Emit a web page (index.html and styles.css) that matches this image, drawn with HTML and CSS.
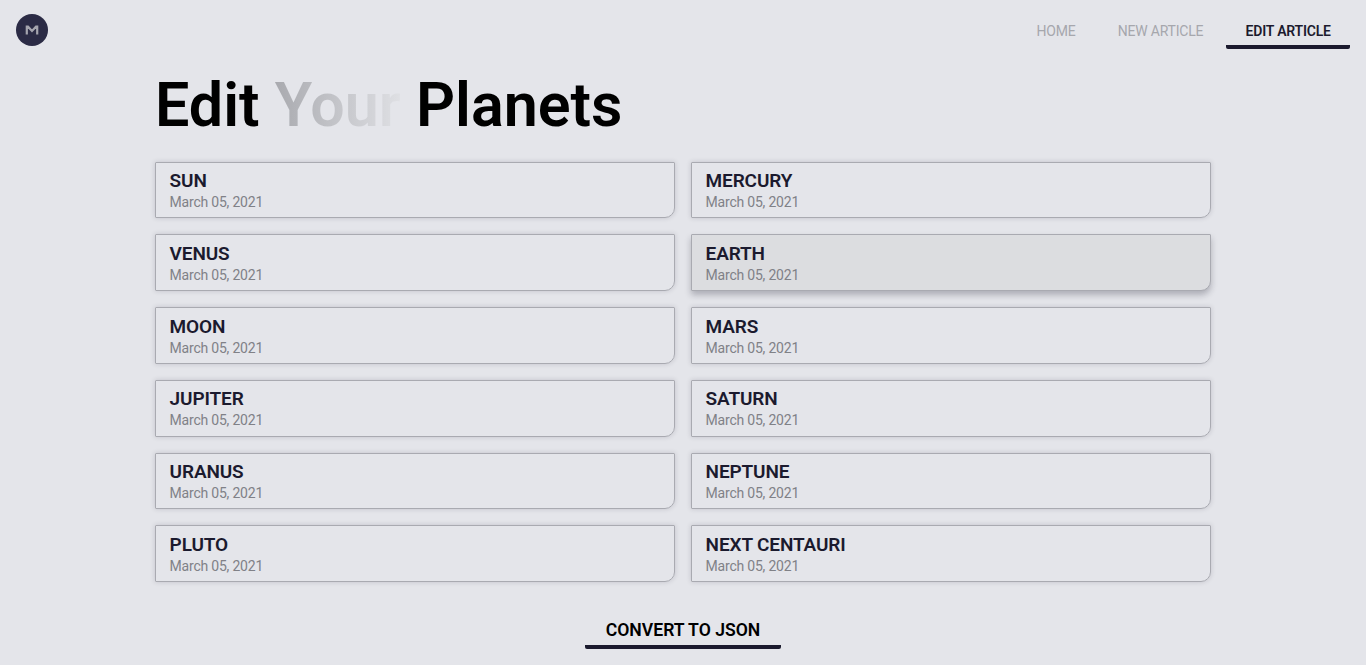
FILE: index.html
```html
<!DOCTYPE html>
<html lang="en">
<head>
<meta charset="utf-8">
<title>Edit Your Planets</title>
<link rel="stylesheet" href="styles.css">
</head>
<body>
<header class="header">
<a class="logo"><svg width="32" height="32" viewBox="0 0 32 32"><circle cx="16" cy="16" r="16" fill="#2b2b45"/><path d="M10.800 20.500V12.700h1.200L16 17l4-4.300h1.200v7.800" fill="none" stroke="#a5a5ae" stroke-width="2.200"/></svg></a>
<nav class="nav"><a class="link">HOME</a><a class="link">NEW ARTICLE</a><a class="link active">EDIT ARTICLE</a></nav>
</header>
<main class="main">
<h1 class="title">Edit <span class="fade">Your</span> Planets</h1>
<section class="grid">
<article class="card"><h2 class="name">SUN</h2><p class="date">March 05, 2021</p></article>
<article class="card"><h2 class="name">MERCURY</h2><p class="date">March 05, 2021</p></article>
<article class="card"><h2 class="name">VENUS</h2><p class="date">March 05, 2021</p></article>
<article class="card hovered"><h2 class="name">EARTH</h2><p class="date">March 05, 2021</p></article>
<article class="card"><h2 class="name">MOON</h2><p class="date">March 05, 2021</p></article>
<article class="card"><h2 class="name">MARS</h2><p class="date">March 05, 2021</p></article>
<article class="card"><h2 class="name">JUPITER</h2><p class="date">March 05, 2021</p></article>
<article class="card"><h2 class="name">SATURN</h2><p class="date">March 05, 2021</p></article>
<article class="card"><h2 class="name">URANUS</h2><p class="date">March 05, 2021</p></article>
<article class="card"><h2 class="name">NEPTUNE</h2><p class="date">March 05, 2021</p></article>
<article class="card"><h2 class="name">PLUTO</h2><p class="date">March 05, 2021</p></article>
<article class="card"><h2 class="name">NEXT CENTAURI</h2><p class="date">March 05, 2021</p></article>
</section>
<button class="convert">CONVERT TO JSON</button>
</main>
</body>
</html>
```
FILE: styles.css
```css
* { box-sizing: border-box; margin: 0; padding: 0; }
body { background: #e4e5ea; font-family: Roboto, sans-serif; color: #000; height: 665px; overflow: hidden; }
.header { display: flex; justify-content: space-between; align-items: flex-start; padding: 14px 16px 0; height: 62px; }
.logo svg { display: block; }
.nav { display: flex; gap: 4px; }
.link { height: 35px; padding: 0 19.2px; line-height: 35px; font-size: 14px; letter-spacing: -0.22px; color: #a6a7ad; border-bottom: 4px solid transparent; border-radius: 2px; }
.active { color: #1b1a2e; font-weight: 600; letter-spacing: -0.2px; border-bottom-color: #1b1a2e; }
.main { width: 1056px; margin: 0 auto; display: flex; flex-direction: column; }
.title { font-size: 61px; font-weight: 600; line-height: 86px; margin-bottom: 13.700px; }
.fade { background: linear-gradient(90deg, #a9aaaf, #dfe0e4); -webkit-background-clip: text; background-clip: text; color: transparent; }
.grid { display: grid; grid-template-columns: 1fr 1fr; gap: 16px; }
.card { height: 56.75px; border: 1px solid #a9aab1; border-radius: 1px 1px 10px 1px; padding: 6.35px 13.600px 0; box-shadow: 0 0 5px rgba(27,26,46,.17); }
.hovered { background: #dcdde0; box-shadow: 0 4px 6px rgba(27,26,46,.27); }
.name { font-size: 19px; letter-spacing: -0.13px; font-weight: 600; line-height: 24px; color: #1b1a2e; }
.date { font-size: 14px; letter-spacing: -0.21px; line-height: 19px; color: #808187; }
.convert { align-self: center; margin-top: 31.700px; width: 196px; height: 35px; padding-top: 1px; border: 0; border-bottom: 4px solid #1b1a2e; border-radius: 2px; background: none; color: #000; font: 600 17.6px Roboto, sans-serif; }
```
